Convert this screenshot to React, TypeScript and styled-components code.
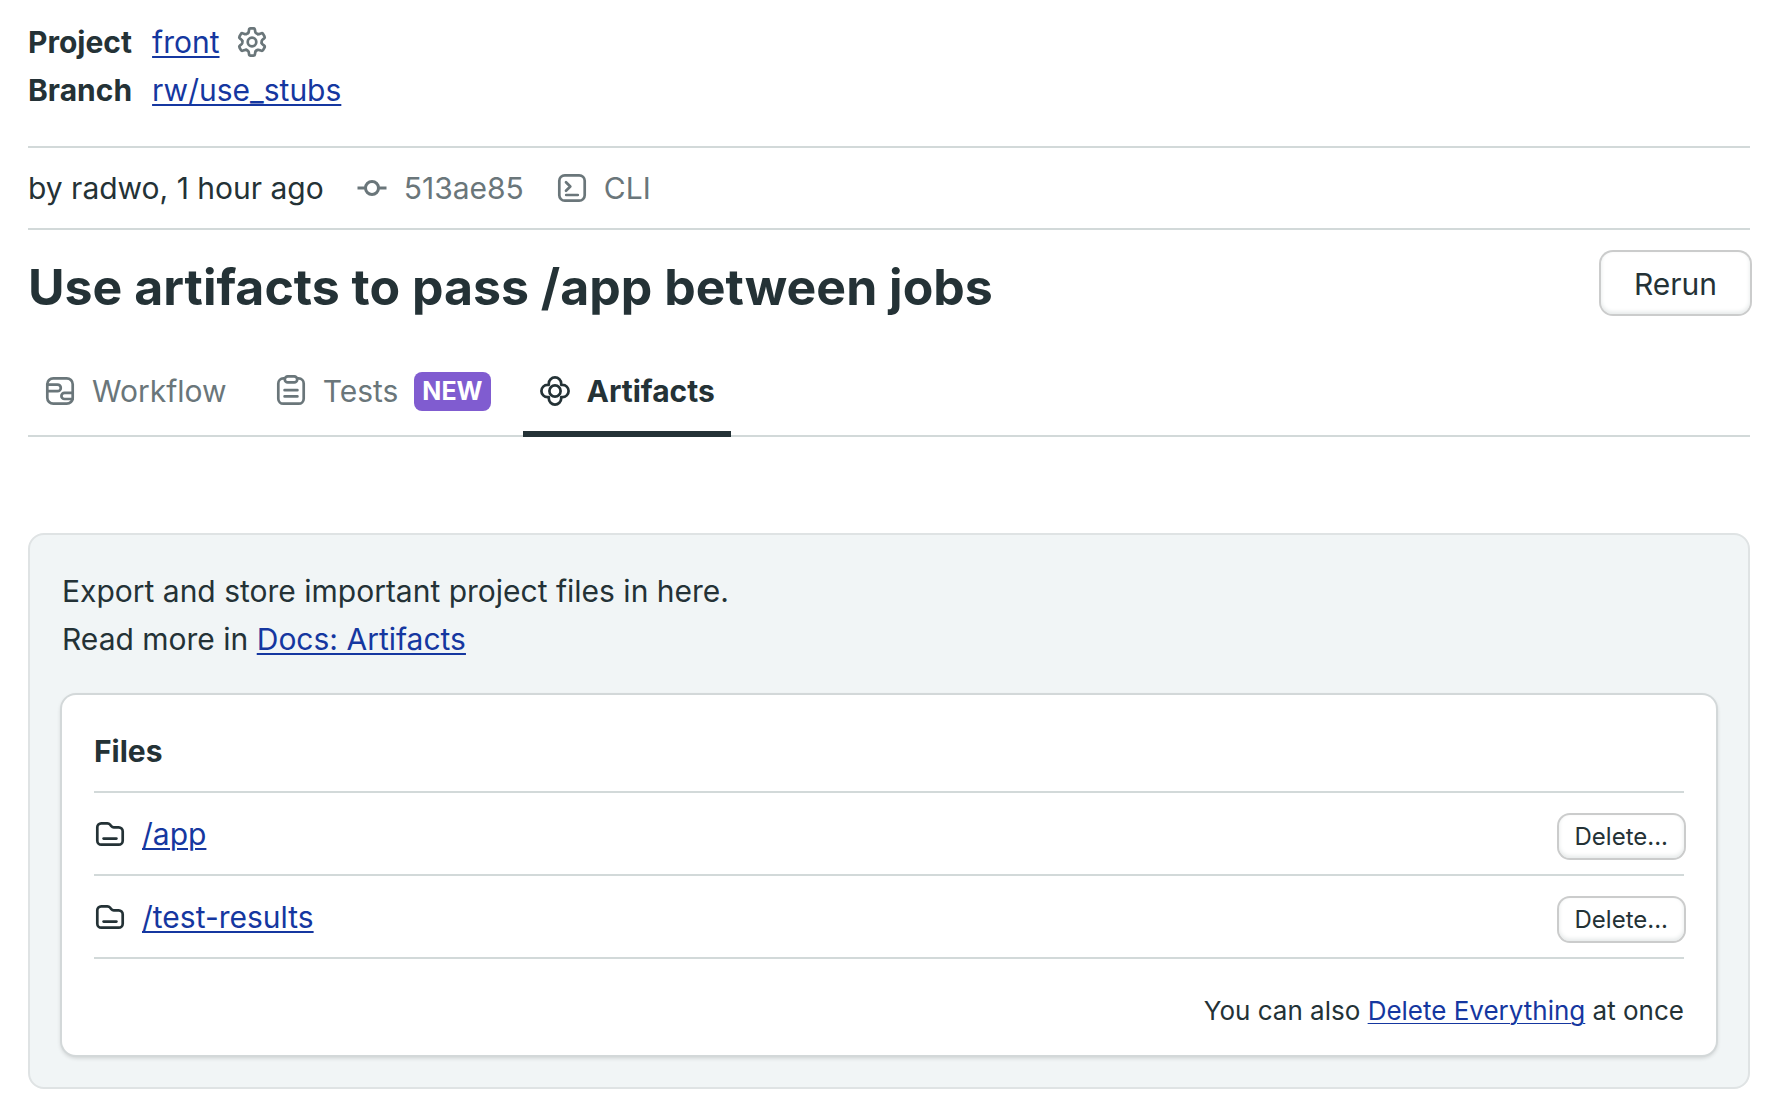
import React from "react";
import styled, { createGlobalStyle } from "styled-components";

const color = {
  text: "#243236",
  muted: "#6a767a",
  link: "#1537a0",
  line: "#d2d9d9",
  panel: "#f1f5f6",
  panelLine: "#dfe3e4",
  ring: "#cbcccc",
  badge: "#805cd0",
};

const GlobalStyle = createGlobalStyle`
  *, *::before, *::after { box-sizing: border-box; }
  body {
    margin: 0;
    background: #fff;
    color: ${color.text};
    font-family: Inter, "Liberation Sans", sans-serif;
    font-size: 30px;
    font-weight: 410;
    line-height: 48px;
  }
`;

const Page = styled.div`
  padding: 18px 30px 26px 28px;
`;

const Meta = styled.dl`
  display: grid;
  grid-template-columns: max-content 1fr;
  column-gap: 20px;
  margin: 0;
  padding-bottom: 32px;
  border-bottom: 2px solid ${color.line};
`;

const MetaLabel = styled.dt`
  font-weight: 700;
`;

const MetaValue = styled.dd`
  display: flex;
  align-items: center;
  gap: 16px;
  margin: 0;
`;

const Link = styled.a`
  color: ${color.link};
  text-decoration: underline;
  text-decoration-thickness: ${(p: { $thin?: boolean }) => (p.$thin ? "1px" : "2px")};
  text-underline-offset: 3px;
`;

const IconLink = styled.a`
  display: flex;
  color: ${color.muted};
`;

const Byline = styled.div`
  display: flex;
  align-items: center;
  gap: 32px;
  padding: 16px 0;
  border-bottom: 2px solid ${color.line};
`;

const BylineItem = styled.span`
  display: flex;
  align-items: center;
  gap: 16px;
  color: ${color.muted};
`;

const TitleRow = styled.header`
  display: flex;
  justify-content: space-between;
  align-items: flex-start;
  gap: 32px;
  padding-top: 22px;
`;

const Title = styled.h1`
  margin: 0;
  font-size: 50px;
  line-height: 70px;
  font-weight: 700;
`;

const Button = styled.button<{ $small?: boolean }>`
  padding: ${(p) => (p.$small ? "0 16px" : "8px 33px 6px")};
  border: 0;
  border-radius: ${(p) => (p.$small ? "11px" : "12px")};
  background: #fff;
  box-shadow: 0 0 0 2px ${color.ring}, inset 0 -2px 4px #e4e8e8;
  color: inherit;
  font: inherit;
  font-size: ${(p) => (p.$small ? "24px" : "30px")};
  line-height: ${(p) => (p.$small ? "43px" : "48px")};
  cursor: pointer;
`;

const Tabs = styled.nav`
  display: flex;
  gap: 16px;
  margin-top: 29px;
  border-bottom: 2px solid ${color.line};
`;

const Tab = styled.a<{ $active?: boolean }>`
  display: flex;
  align-items: center;
  gap: 16px;
  margin-bottom: -2px;
  padding: 16px 16px;
  border-bottom: 6px solid ${(p) => (p.$active ? color.text : "transparent")};
  color: ${(p) => (p.$active ? color.text : color.muted)};
  font-weight: ${(p) => (p.$active ? 700 : 410)};
  text-decoration: none;
`;

const Badge = styled.span`
  padding: 0 8px;
  border-radius: 8px;
  background: ${color.badge};
  color: #fff;
  font-size: 25px;
  line-height: 39px;
  font-weight: 700;
`;

const Panel = styled.section`
  margin-top: 96px;
  padding: 32px;
  border: 2px solid ${color.panelLine};
  border-radius: 16px;
  background: ${color.panel};
`;

const Intro = styled.p`
  margin: 0 0 32px;
`;

const Card = styled.div`
  padding: 32px 32px 24px;
  border-radius: 14px;
  background: #fff;
  box-shadow: 0 0 0 2px #d3d8d9, 0 2px 4px 1px rgba(0, 0, 0, 0.16);
`;

const CardTitle = styled.h2`
  margin: 0;
  padding-bottom: 16px;
  border-bottom: 2px solid ${color.line};
  font-size: 30px;
  line-height: 48px;
  font-weight: 700;
`;

const FileList = styled.ul`
  margin: 0;
  padding: 0;
  list-style: none;
`;

const FileRow = styled.li`
  display: flex;
  align-items: baseline;
  justify-content: space-between;
  gap: 16px;
  padding: 17px 0 16px;
  border-bottom: 2px solid ${color.line};
`;

const FileName = styled.span`
  display: flex;
  align-items: baseline;
  gap: 16px;

  svg {
    align-self: center;
  }
`;

const Footer = styled.p`
  margin: 32px 0 0;
  font-size: 26px;
  line-height: 40px;
  text-align: right;
`;

const Svg = styled.svg`
  flex: none;
  display: block;
  width: 32px;
  height: 32px;
  fill: none;
  stroke: currentColor;
  stroke-width: 2.7;
  stroke-linecap: round;
  stroke-linejoin: round;
`;

const Icon = ({ children }: { children: React.ReactNode }) => (
  <Svg viewBox="0 0 32 32" aria-hidden="true">
    {children}
  </Svg>
);

const GearIcon = () => (
  <Icon>
    <g transform="translate(16 16)">
      <circle r="4.3" />
      {[0, 60, 120, 180, 240, 300].map((angle) => (
        <path
          key={angle}
          transform={`rotate(${angle})`}
          d="M-3.9 -9C-3 -9.9 -3.2 -10.6 -3 -12Q-2.8 -13.6 -1.5 -13.6H1.5Q2.8 -13.6 3 -12C3.2 -10.6 3 -9.9 3.9 -9Q4.8 -8.2 5.84 -7.88"
        />
      ))}
    </g>
  </Icon>
);

const CommitIcon = () => (
  <Icon>
    <circle cx="16" cy="16" r="6.5" strokeWidth="3" />
    <path d="M1.5 16H9M23 16H30.5" strokeWidth="3" strokeLinecap="butt" />
  </Icon>
);

const TerminalIcon = () => (
  <Icon>
    <rect x="3.3" y="3.3" width="25.4" height="25.4" rx="5.5" />
    <path d="M10 10.2L14.3 14.5L10 18.8M10.2 23H21.8" />
  </Icon>
);

const WorkflowIcon = () => (
  <Icon>
    <rect x="3.3" y="3.3" width="25.4" height="25.4" rx="6" />
    <path d="M3.3 9.6H13.5a3.3 3.3 0 0 1 0 6.6H3.3M28.7 17.8H20.5a3.1 3.1 0 0 0 0 6.2H28.7" />
  </Icon>
);

const ClipboardIcon = () => (
  <Icon>
    <path d="M9.5 3.4H8.3a5 5 0 0 0-5 5V23.7a5 5 0 0 0 5 5H23.7a5 5 0 0 0 5-5V8.4a5 5 0 0 0-5-5H22.5" />
    <rect x="9.8" y="1.4" width="12.4" height="6" rx="3" />
    <path d="M9.6 15.2H22.4M9.6 21.4H22.4" />
  </Icon>
);

const FlowerIcon = () => (
  <Icon>
    <circle cx="16" cy="16" r="5.6" />
    <path d="M9.8 9.8V8.6a6.2 6.2 0 0 1 12.4 0V9.8H23.4a6.2 6.2 0 0 1 0 12.4H22.2V23.4a6.2 6.2 0 0 1-12.4 0V22.2H8.6a6.2 6.2 0 0 1 0-12.4Z" />
  </Icon>
);

const FolderIcon = () => (
  <Icon>
    <path d="M3.3 9.3a4 4 0 0 1 4-4H13.4q1.6 0 2.6 1.2L17.3 8.2q1 1.1 2.4 1.1H24.7a4 4 0 0 1 4 4V22.7a4 4 0 0 1-4 4H7.3a4 4 0 0 1-4-4Z" />
    <path d="M9.6 20.6H22.4" />
  </Icon>
);

const files = ["/app", "/test-results"];

export default function App() {
  return (
    <>
      <GlobalStyle />
      <Page>
        <Meta>
          <MetaLabel>Project</MetaLabel>
          <MetaValue>
            <Link href="#front">front</Link>
            <IconLink href="#settings" aria-label="Project settings">
              <GearIcon />
            </IconLink>
          </MetaValue>
          <MetaLabel>Branch</MetaLabel>
          <MetaValue>
            <Link href="#branch">rw/use_stubs</Link>
          </MetaValue>
        </Meta>

        <Byline>
          <span>by radwo, 1 hour ago</span>
          <BylineItem>
            <CommitIcon />
            513ae85
          </BylineItem>
          <BylineItem>
            <TerminalIcon />
            CLI
          </BylineItem>
        </Byline>

        <TitleRow>
          <Title>Use artifacts to pass /app between jobs</Title>
          <Button type="button">Rerun</Button>
        </TitleRow>

        <Tabs>
          <Tab href="#workflow">
            <WorkflowIcon />
            Workflow
          </Tab>
          <Tab href="#tests">
            <ClipboardIcon />
            Tests
            <Badge>NEW</Badge>
          </Tab>
          <Tab href="#artifacts" $active aria-current="page">
            <FlowerIcon />
            Artifacts
          </Tab>
        </Tabs>

        <Panel>
          <Intro>
            Export and store important project files in here.
            <br />
            Read more in <Link href="#docs">Docs: Artifacts</Link>
          </Intro>
          <Card>
            <CardTitle>Files</CardTitle>
            <FileList>
              {files.map((name) => (
                <FileRow key={name}>
                  <FileName>
                    <FolderIcon />
                    <Link href={`#${name}`}>{name}</Link>
                  </FileName>
                  <Button type="button" $small>
                    Delete...
                  </Button>
                </FileRow>
              ))}
            </FileList>
            <Footer>
              You can also{" "}
              <Link href="#delete-everything" $thin>
                Delete Everything
              </Link>{" "}
              at once
            </Footer>
          </Card>
        </Panel>
      </Page>
    </>
  );
}
